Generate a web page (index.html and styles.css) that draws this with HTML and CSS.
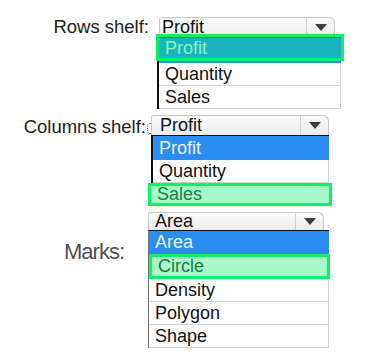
FILE: index.html
```html
<!DOCTYPE html>
<html lang="en">
<head>
    <meta charset="UTF-8">
    <meta name="viewport" content="width=device-width, initial-scale=1.0">
    <title>Shelf settings</title>
    <link rel="stylesheet" href="styles.css">
</head>
<body>

<div class="form">
    <!-- Rows shelf -->
    <div class="field field-rows">
        <label class="field-label">Rows shelf:</label>
        <div class="combo">
            <div class="select">
                <span class="select-value">Profit</span>
                <span class="select-arrow"><svg width="12" height="7" viewBox="0 0 12 7"><polygon points="0,0 12,0 6,7" fill="#3c3c3c"/></svg></span>
            </div>
            <ul class="options">
                <li class="opt opt-teal opt-mark">Profit</li>
                <li class="opt">Quantity</li>
                <li class="opt">Sales</li>
            </ul>
        </div>
    </div>

    <!-- Columns shelf -->
    <div class="field field-columns">
        <label class="field-label">Columns shelf:<span class="focus-dots"></span></label>
        <div class="combo">
            <div class="select">
                <span class="select-value">Profit</span>
                <span class="select-arrow"><svg width="12" height="7" viewBox="0 0 12 7"><polygon points="0,0 12,0 6,7" fill="#3c3c3c"/></svg></span>
            </div>
            <ul class="options">
                <li class="opt opt-blue">Profit</li>
                <li class="opt">Quantity</li>
                <li class="opt opt-green opt-mark">Sales</li>
            </ul>
        </div>
    </div>

    <!-- Marks -->
    <div class="field field-marks">
        <label class="field-label">Marks:</label>
        <div class="combo">
            <div class="select">
                <span class="select-value">Area</span>
                <span class="select-arrow"><svg width="12" height="7" viewBox="0 0 12 7"><polygon points="0,0 12,0 6,7" fill="#3c3c3c"/></svg></span>
            </div>
            <ul class="options">
                <li class="opt opt-blue">Area</li>
                <li class="opt opt-green opt-mark">Circle</li>
                <li class="opt">Density</li>
                <li class="opt">Polygon</li>
                <li class="opt">Shape</li>
            </ul>
        </div>
    </div>
</div>

</body>
</html>
```

FILE: styles.css
```css
body {
    margin: 0;
    background-color: #fff;
    font-family: "Liberation Sans", Arial, sans-serif;
    color: #111;
}
.form {
    padding-top: 17px;
}
.field {
    display: flex;
    align-items: flex-start;
    margin-bottom: 6px;
}
.field-label {
    text-align: right;
    font-size: 18.5px;
    line-height: 20px;
    color: #222;
}
.combo {
    display: flex;
    flex-direction: column;
}
.select {
    display: flex;
    box-sizing: border-box;
    height: 20px;
    border: 1px solid #c9c9c9;
    border-bottom: none;
    border-radius: 3px 6px 0 0;
    background: linear-gradient(#fbfbfb, #ebebeb);
}
.select-value {
    flex: 1;
    padding-left: 6px;
    font-size: 18px;
    line-height: 19px;
    color: #111;
}
.select-arrow {
    width: 27px;
    border-left: 1px solid #cfcfcf;
    display: flex;
    align-items: center;
    justify-content: center;
}
.options {
    list-style-type: none;
    margin: 0;
    padding: 0;
}
.opt {
    box-sizing: border-box;
    height: 23px;
    padding-left: 6px;
    font-size: 18px;
    line-height: 22px;
    background-color: #fff;
    border-bottom: 1px solid #d2d2d2;
    border-right: 1px solid #d2d2d2;
}
.opt-blue {
    height: 24px;
    line-height: 24px;
    background-color: #2b8cf1;
    color: #e4f2ff;
    border: none;
}
.opt-teal {
    background-color: #19b2c2;
    color: #8ff2b6;
    border: none;
    border-top: 1px solid #0f7d86;
}
.opt-green {
    background-color: #a9f8c9;
    color: #1b7c44;
    border: none;
}
.opt-mark {
    outline: 3px solid #0cf266;
    margin: 3px 0;
}

/* Rows shelf */
.field-rows .field-label {
    width: 149px;
    margin-right: 8px;
}
.field-rows .select {
    width: 176px;
    margin-left: 2px;
}
.field-rows .select-value {
    padding-left: 2px;
}
.field-rows .options {
    width: 182px;
    border-left: 2px solid #111;
}
.field-rows .opt-mark {
    height: 21px;
    line-height: 21px;
    margin: 0 0 5px;
    box-shadow: 0 5px 0 #2b8cf1;
}

/* Columns shelf */
.field-columns .field-label {
    width: 150px;
    margin-right: 1px;
    padding-top: 2px;
}
.focus-dots {
    display: inline-block;
    width: 4px;
    height: 11px;
    margin-left: 1px;
    margin-right: -1px;
    vertical-align: -1px;
    border-left: 1px dotted #555;
    border-top: 1px dotted #777;
    border-bottom: 1px dotted #777;
    border-radius: 4px 0 0 4px;
    box-sizing: border-box;
}
.field-columns .select {
    width: 178px;
}
.field-columns .select-value {
    padding-left: 8px;
}
.field-columns .options {
    width: 176px;
    border-left: 2px solid #111;
    border-top: 1px solid #111;
}
.field-columns .opt-mark {
    height: 17px;
    line-height: 17px;
    margin-left: -2px;
}

/* Marks */
.field-marks .field-label {
    width: 124px;
    margin-right: 24px;
    padding-top: 27px;
    font-size: 22px;
    line-height: 26px;
    letter-spacing: -1px;
    color: #505050;
}
.field-marks .select {
    width: 176px;
    height: 18px;
}
.field-marks .select-value {
    line-height: 17px;
}
.field-marks .options {
    width: 180px;
    border-left: 1px solid #777;
    border-top: 1px solid #111;
}
.field-marks .opt-blue {
    height: 23px;
    line-height: 23px;
}
.field-marks .opt-mark {
    height: 19px;
    line-height: 19px;
    margin-left: 3px;
    margin-right: 2px;
}
```
